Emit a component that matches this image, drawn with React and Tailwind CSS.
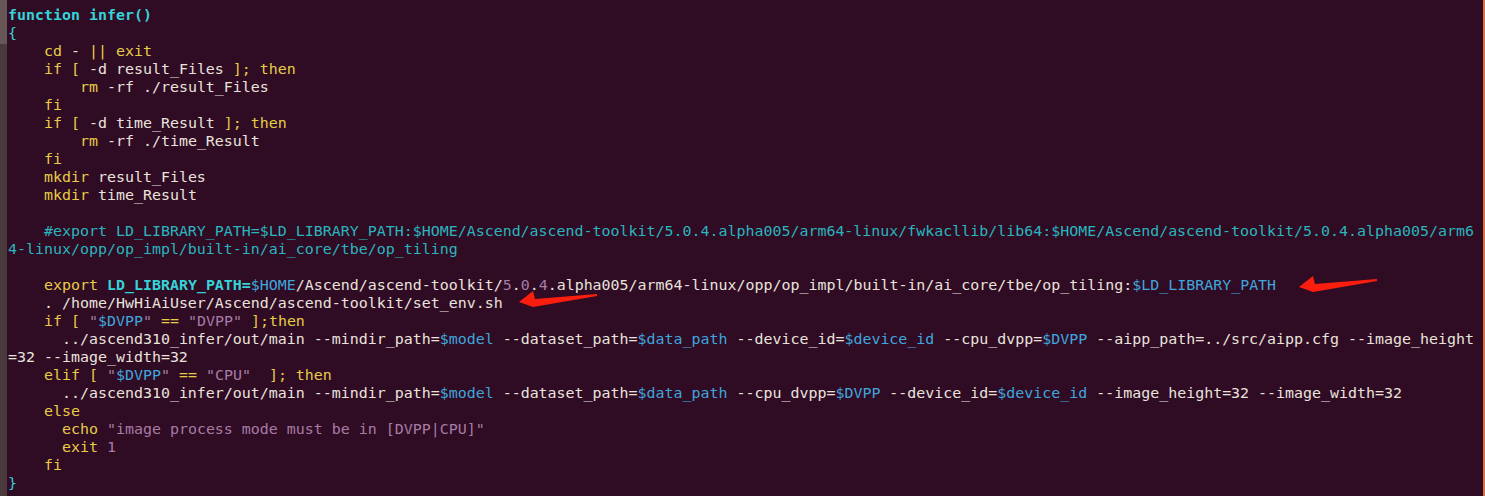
import React from "react";

const Y = "text-[#e6cd47]";
const W = "text-[#e9e3dc]";
const C = "text-[#36d3d8] font-bold";
const CN = "text-[#36d3d8]";
const T = "text-[#2ab5be]";
const B = "text-[#3fa6dc]";
const M = "text-[#a77ca4]";

const lines = [
  [["function infer()", C]],
  [["{", CN]],
  [["    "], ["cd", Y], [" - ", W], ["||", Y], [" "], ["exit", Y]],
  [["    "], ["if [", Y], [" -d result_Files ", W], ["]; then", Y]],
  [["        "], ["rm", Y], [" -rf ./result_Files", W]],
  [["    "], ["fi", Y]],
  [["    "], ["if [", Y], [" -d time_Result ", W], ["]; then", Y]],
  [["        "], ["rm", Y], [" -rf ./time_Result", W]],
  [["    "], ["fi", Y]],
  [["    "], ["mkdir", Y], [" result_Files", W]],
  [["    "], ["mkdir", Y], [" time_Result", W]],
  [[" "]],
  [
    ["    "],
    [
      "#export LD_LIBRARY_PATH=$LD_LIBRARY_PATH:$HOME/Ascend/ascend-toolkit/5.0.4.alpha005/arm64-linux/fwkacllib/lib64:$HOME/Ascend/ascend-toolkit/5.0.4.alpha005/arm6",
      T,
    ],
  ],
  [["4-linux/opp/op_impl/built-in/ai_core/tbe/op_tiling", T]],
  [[" "]],
  [
    ["    "],
    ["export", Y],
    [" "],
    ["LD_LIBRARY_PATH=", C],
    ["$HOME", B],
    ["/Ascend/ascend-toolkit/", W],
    ["5", M],
    [".", W],
    ["0", M],
    [".", W],
    ["4", M],
    [".alpha005/arm64-linux/opp/op_impl/built-in/ai_core/tbe/op_tiling:", W],
    ["$LD_LIBRARY_PATH", B],
  ],
  [["    "], [". /home/HwHiAiUser/Ascend/ascend-toolkit/set_env.sh", W]],
  [
    ["    "],
    ["if [", Y],
    [" "],
    ['"', M],
    ["$DVPP", B],
    ['"', M],
    [" "],
    ["==", Y],
    [" "],
    ['"DVPP"', M],
    [" "],
    ["];then", Y],
  ],
  [
    ["      "],
    ["../ascend310_infer/out/main --mindir_path=", W],
    ["$model", B],
    [" --dataset_path=", W],
    ["$data_path", B],
    [" --device_id=", W],
    ["$device_id", B],
    [" --cpu_dvpp=", W],
    ["$DVPP", B],
    [" --aipp_path=../src/aipp.cfg --image_height", W],
  ],
  [["=32 --image_width=32", W]],
  [
    ["    "],
    ["elif [", Y],
    [" "],
    ['"', M],
    ["$DVPP", B],
    ['"', M],
    [" "],
    ["==", Y],
    [" "],
    ['"CPU"', M],
    ["  "],
    ["]; then", Y],
  ],
  [
    ["      "],
    ["../ascend310_infer/out/main --mindir_path=", W],
    ["$model", B],
    [" --dataset_path=", W],
    ["$data_path", B],
    [" --cpu_dvpp=", W],
    ["$DVPP", B],
    [" --device_id=", W],
    ["$device_id", B],
    [" --image_height=32 --image_width=32", W],
  ],
  [["    "], ["else", Y]],
  [["      "], ["echo", Y], [" "], ['"image process mode must be in [DVPP|CPU]"', M]],
  [["      "], ["exit", Y], [" "], ["1", M]],
  [["    "], ["fi", Y]],
  [["}", CN]],
];

function Arrow({ className }) {
  return (
    <svg
      className={className}
      width="80"
      height="19"
      viewBox="0 0 80 19"
    >
      <polygon
        points="0,12 14,1 16,9 78,4 78,6 14,17"
        fill="#fb1e0e"
      />
    </svg>
  );
}

export default function App() {
  return (
    <div className="relative flex w-[1485px] h-[496px] overflow-hidden bg-[#2f0b24]">
      <div className="flex flex-col w-[7px] shrink-0 bg-[#4a3a3e]">
        <div className="h-[44px] bg-[#665657]" />
      </div>
      <div
        className="flex-1 pl-[1px] pt-[6px] text-[14.95px] leading-[18px] whitespace-pre"
        style={{ fontFamily: '"DejaVu Sans Mono", monospace' }}
      >
        {lines.map((segs, i) => (
          <div key={i} className="h-[18px]">
            {segs.map(([t, cls], j) => (
              <span key={j} className={cls || W}>
                {t}
              </span>
            ))}
          </div>
        ))}
      </div>
      <div className="w-[2px] shrink-0 bg-[#d8713e]" />
      <Arrow className="absolute left-[1299px] top-[275px]" />
      <Arrow className="absolute left-[519px] top-[290px]" />
    </div>
  );
}
